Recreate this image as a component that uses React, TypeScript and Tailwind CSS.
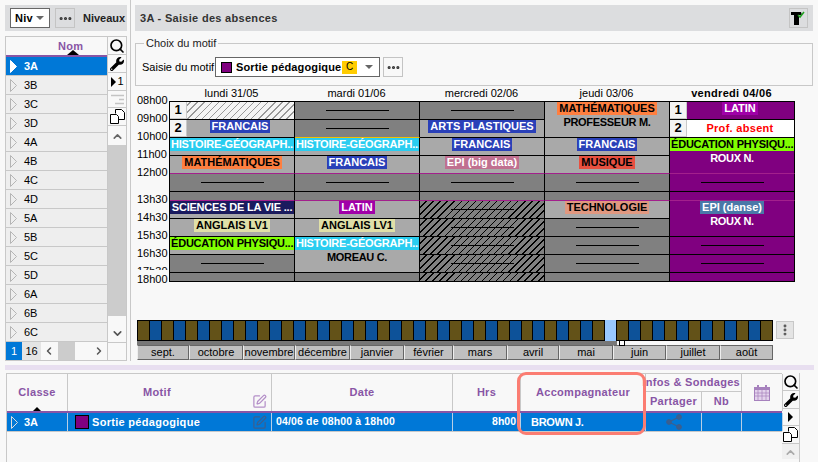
import { Search, Ellipsis, EllipsisVertical, ChevronUp, ChevronDown, ChevronLeft, ChevronRight, SquarePen } from 'lucide-react';
import { FaWrench } from 'react-icons/fa';

const classes = ['3A', '3B', '3C', '3D', '4A', '4B', '4C', '4D', '5A', '5B', '5C', '5D', '6A', '6B', '6C'];
const months = [
    ['sept.', 'w-[52px]'], ['octobre', 'w-[54px]'], ['novembre', 'w-[52px]'], ['décembre', 'w-[55px]'],
    ['janvier', 'w-[54px]'], ['février', 'w-[49px]'], ['mars', 'w-[54px]'], ['avril', 'w-[52px]'],
    ['mai', 'w-[54px]'], ['juin', 'w-[53px]'], ['juillet', 'w-[54px]'], ['août', 'w-[53px]'],
];

const HATCH_LIGHT = 'bg-[repeating-linear-gradient(135deg,#f4f4f4_0_4px,#999_4px_5px)]';
const HATCH_DARK = 'bg-[repeating-linear-gradient(135deg,#808080_0_4px,#000_4px_5px)]';
const DARK = 'bg-[#808080]';
const GRAY = 'bg-[#a9a9a9]';
const PURPLE = 'bg-[#800080]';
const LINE = 'border-t-black';
const PINK = 'border-t-[#a3208c]';

type Slot = {
    bg?: string;
    span?: string;
    top?: string;
    dash?: boolean;
    band?: string;
    chip?: string;
    sub?: string;
    text?: string;
    num?: string;
    subColor?: string;
};

const cyan = 'bg-[#29cdf0] text-white';
const green = 'bg-[#80ff00] text-black';
const blue = 'bg-[#2a40b8] text-white';
const orange = 'bg-[#ff7f40] text-black';
const pale = 'bg-[#e0e0a8] text-black';
const latin = 'bg-[#a000a8] text-white';

const days: { label: string; bold?: boolean; slots: Slot[] }[] = [
    {
        label: 'lundi 31/05',
        slots: [
            { bg: HATCH_LIGHT, num: '1' },
            { bg: GRAY, chip: blue, text: 'FRANCAIS', num: '2' },
            { bg: GRAY, band: cyan, text: 'HISTOIRE-GÉOGRAPH...' },
            { bg: GRAY, chip: orange, text: 'MATHÉMATIQUES' },
            { bg: DARK, dash: true, top: PINK },
            { bg: DARK },
            { bg: GRAY, band: 'bg-[#1a1a5e] text-white', text: 'SCIENCES DE LA VIE ...', top: PINK },
            { bg: GRAY, chip: pale, text: 'ANGLAIS LV1' },
            { bg: GRAY, band: green, text: 'ÉDUCATION PHYSIQU...' },
            { bg: DARK, dash: true },
            { bg: DARK },
        ],
    },
    {
        label: 'mardi 01/06',
        slots: [
            { bg: DARK, dash: true },
            { bg: DARK, dash: true },
            { bg: GRAY, band: cyan, text: 'HISTOIRE-GÉOGRAPH...', top: 'border-t-[#f0c000]' },
            { bg: GRAY, chip: blue, text: 'FRANCAIS' },
            { bg: DARK, dash: true, top: PINK },
            { bg: DARK },
            { bg: GRAY, chip: latin, text: 'LATIN', top: PINK },
            { bg: GRAY, chip: pale, text: 'ANGLAIS LV1' },
            { bg: GRAY, span: 'row-span-2', band: cyan, text: 'HISTOIRE-GÉOGRAPH...', sub: 'MOREAU C.' },
            { bg: DARK },
        ],
    },
    {
        label: 'mercredi 02/06',
        slots: [
            { bg: DARK, dash: true },
            { bg: GRAY, chip: blue, text: 'ARTS PLASTIQUES' },
            { bg: GRAY, chip: blue, text: 'FRANCAIS' },
            { bg: GRAY, chip: 'bg-[#c07090] text-white', text: 'EPI (big data)' },
            { bg: DARK, dash: true, top: PINK },
            { bg: DARK },
            { bg: HATCH_DARK, dash: true, top: PINK },
            { bg: HATCH_DARK, dash: true },
            { bg: HATCH_DARK, dash: true },
            { bg: HATCH_DARK, dash: true },
            { bg: HATCH_DARK },
        ],
    },
    {
        label: 'jeudi 03/06',
        slots: [
            { bg: GRAY, span: 'row-span-2', chip: orange, text: 'MATHÉMATIQUES', sub: 'PROFESSEUR M.' },
            { bg: GRAY, chip: blue, text: 'FRANCAIS' },
            { bg: GRAY, chip: 'bg-[#e85040] text-black', text: 'MUSIQUE' },
            { bg: DARK, dash: true, top: PINK },
            { bg: DARK },
            { bg: GRAY, chip: 'bg-[#e09880] text-black', text: 'TECHNOLOGIE', top: PINK },
            { bg: DARK, dash: true },
            { bg: DARK, dash: true },
            { bg: DARK, dash: true },
            { bg: DARK },
        ],
    },
    {
        label: 'vendredi 04/06',
        bold: true,
        slots: [
            { bg: PURPLE, chip: latin, text: 'LATIN', num: '1' },
            { bg: 'bg-white', text: 'Prof. absent', num: '2', subColor: 'text-[#ff0000]' },
            { bg: PURPLE, span: 'row-span-2', band: green, text: 'ÉDUCATION PHYSIQU...', sub: 'ROUX N.', subColor: 'text-white' },
            { bg: PURPLE, dash: true, top: PINK },
            { bg: PURPLE },
            { bg: PURPLE, span: 'row-span-2', chip: 'bg-[#4a78a8] text-white', text: 'EPI (danse)', sub: 'ROUX N.', subColor: 'text-white', top: PINK },
            { bg: PURPLE, dash: true },
            { bg: PURPLE, dash: true },
            { bg: PURPLE },
        ],
    },
];

function Arrow({ fill = 'none', stroke = '#b5b5b5' }: { fill?: string; stroke?: string }) {
    return (
        <svg width="7" height="13" viewBox="0 0 7 13" className="shrink-0">
            <polygon points="0.5,0.5 6.5,6.5 0.5,12.5" fill={fill} stroke={stroke} />
        </svg>
    );
}

function CopyIcon() {
    return (
        <svg width="15" height="15" viewBox="0 0 15 15">
            <path d="M5.5 4.5v-4h6l3 3v7h-6" fill="#fff" stroke="#000" />
            <path d="M0.5 5.5h6l2 2v7h-8z" fill="#fff" stroke="#000" />
        </svg>
    );
}

function ToolButton({ children, className = '' }: { children: React.ReactNode; className?: string }) {
    return <div className={`flex items-center justify-center border-b border-[#c8c8c8] ${className}`}>{children}</div>;
}

function Cell({ slot }: { slot: Slot }) {
    return (
        <div className={`relative flex flex-col items-center overflow-hidden border-t border-r border-r-black ${slot.top ?? LINE} ${slot.bg} ${slot.span ?? ''} ${slot.num ? 'pl-[16px]' : ''}`}>
            {slot.num && (
                <div className="absolute left-0 top-0 z-10 flex h-[17px] w-[17px] items-center justify-center border-r border-b border-[#c8c8c8] bg-[#f4f4f4] text-[13px] font-bold text-black">
                    {slot.num}
                </div>
            )}
            {slot.dash && <div className="mt-[8px] h-px w-[63px] bg-black" />}
            {slot.band && (
                <div className={`h-[13px] w-full whitespace-nowrap px-px text-center text-[11px] font-bold leading-[13px] tracking-[-0.2px] ${slot.band}`}>
                    {slot.text}
                </div>
            )}
            {slot.chip && (
                <div className={`h-[13px] whitespace-nowrap px-[2px] text-[11px] font-bold leading-[13px] ${slot.chip}`}>
                    {slot.text}
                </div>
            )}
            {!slot.band && !slot.chip && slot.text && (
                <div className={`h-[13px] whitespace-nowrap text-[11px] font-bold leading-[17px] tracking-[0.3px] ${slot.subColor}`}>{slot.text}</div>
            )}
            {slot.sub && (
                <div className={`h-[13px] whitespace-nowrap text-[11px] font-bold leading-[14px] tracking-[-0.3px] ${slot.subColor ?? 'text-black'}`}>{slot.sub}</div>
            )}
        </div>
    );
}

function LeftPanel() {
    return (
        <div className="flex h-[361px] w-[131px] shrink-0 flex-col border-r border-[#c8c8c8] pl-[5px] pr-[3px] pt-[5px]">
            <div className="flex h-[26px] items-center bg-[#dcdddf] pl-[5px]">
                <div className="flex h-[20px] w-[40px] items-center justify-between border border-[#666] bg-white pl-[4px] pr-[5px] text-[11px] font-bold tracking-[0.3px] text-black">
                    Niv
                    <span className="h-0 w-0 border-x-[4px] border-t-[4px] border-x-transparent border-t-[#666]" />
                </div>
                <div className="ml-[5px] flex h-[20px] w-[20px] items-center justify-center border border-[#c4c4c4]">
                    <Ellipsis size={15} strokeWidth={3} className="text-[#333]" />
                </div>
                <span className="ml-[8px] text-[11px] font-bold text-[#222]">Niveaux</span>
            </div>
            <div className="mt-[5px] flex h-[325px] border border-[#c8c8c8]">
                <div className="flex w-[103px] flex-col border-r border-[#c8c8c8]">
                    <div className="relative flex h-[20px] shrink-0 items-center justify-center border-b-2 border-[#8855a5] pl-[28px] text-[11px] font-bold tracking-[0.3px] text-[#8855a5]">
                        Nom
                        <span className="absolute bottom-0 left-[61px] h-0 w-0 border-x-[6px] border-b-[5px] border-x-transparent border-b-black" />
                    </div>
                    {classes.map((c, i) => (
                        <div
                            key={c}
                            className={`flex h-[19px] shrink-0 items-center gap-[7px] border-b border-[#c8c8c8] pl-[4px] text-[11px] ${i === 0 ? 'bg-[#0078d7] font-bold text-white' : 'bg-[#eeeeee] text-black'}`}
                        >
                            <Arrow fill={i === 0 ? '#fff' : 'none'} stroke={i === 0 ? '#fff' : '#b5b5b5'} />
                            {c}
                        </div>
                    ))}
                    <div className="flex h-[18px] items-center text-[11px]">
                        <div className="flex h-full w-[16px] items-center justify-center bg-[#0078d7] text-white">1</div>
                        <div className="flex h-full w-[19px] items-center justify-center bg-[#e4e4e4] text-black">16</div>
                        <ChevronLeft size={12} strokeWidth={3} className="ml-[2px] text-[#555]" />
                        <div className="ml-[3px] h-full w-[17px] bg-[#cccccc]" />
                        <ChevronRight size={12} strokeWidth={3} className="ml-[18px] text-[#555]" />
                    </div>
                </div>
                <div className="flex w-[18px] flex-col">
                    <ToolButton className="h-[18px] shrink-0"><Search size={16} strokeWidth={2.5} className="text-black" /></ToolButton>
                    <ToolButton className="h-[18px] shrink-0"><FaWrench size={14} className="text-black" /></ToolButton>
                    <ToolButton className="h-[18px] shrink-0 text-[11px] text-black">
                        <span className="mr-[2px] h-0 w-0 border-y-[5px] border-l-[5px] border-y-transparent border-l-black" />1
                    </ToolButton>
                    <ToolButton className="h-[17px] shrink-0">
                        <svg width="15" height="11" viewBox="0 0 15 11"><path d="M1 1.5h13M9 5.5h5M5 9.5h9" stroke="#c4c4c4" strokeWidth="1.4" /></svg>
                    </ToolButton>
                    <ToolButton className="h-[18px] shrink-0"><CopyIcon /></ToolButton>
                    <div className="flex flex-1 flex-col items-center">
                        <ChevronUp size={13} strokeWidth={3} className="mt-[4px] text-[#666]" />
                        <div className="mt-[2px] h-[171px] w-full bg-[#cccccc]" />
                        <ChevronDown size={13} strokeWidth={3} className="mt-[11px] text-[#555]" />
                    </div>
                    <div className="h-[18px] shrink-0 border-t border-[#c8c8c8]" />
                </div>
            </div>
        </div>
    );
}

function Timetable() {
    return (
        <div className="ml-[2px] flex">
            <div className="flex w-[32px] flex-col pt-[5px] text-right text-[11px] leading-[18px] text-black">
                {['08h00', '09h00', '10h00', '11h00', '12h00'].map((t) => (
                    <div key={t} className="h-[18px] pr-[3px]">{t}</div>
                ))}
                <div className="mt-[9px] h-[18px] pr-[3px]">13h30</div>
                {['14h30', '15h30', '16h30', '17h30'].map((t) => (
                    <div key={t} className="h-[18px] pr-[3px]">{t}</div>
                ))}
                <div className="relative -mt-[10px] h-[18px] bg-[#f8f8f8] pr-[3px]">18h00</div>
            </div>
            <div>
                <div className="grid w-[627px] grid-cols-[repeat(5,125px)]">
                    {days.map((d) => (
                        <div key={d.label} className={`h-[15px] text-center text-[11px] leading-[15px] text-black ${d.bold ? 'font-bold tracking-[0.3px]' : ''}`}>
                            {d.label}
                        </div>
                    ))}
                </div>
                <div className="grid w-[626px] grid-flow-col grid-cols-[repeat(5,125px)] grid-rows-[18px_18px_18px_18px_18px_9px_18px_18px_18px_18px_9px] border-b border-l border-black">
                    {days.flatMap((d) => d.slots.map((s, i) => <Cell key={d.label + i} slot={s} />))}
                </div>
            </div>
        </div>
    );
}

function YearBar() {
    const weeks = Array.from({ length: 52 }, (_, i) => i);
    return (
        <div className="ml-[2px] mt-[32px] flex">
            <div className="w-[636px]">
                <div className="flex h-[21px] items-stretch border-y border-black bg-black pl-px">
                    {weeks.slice(0, 39).map((w) => (
                        <div key={w} className={`mr-px w-[11px] ${w % 2 === 0 ? 'bg-[#635218]' : 'bg-[#0d5299]'}`} />
                    ))}
                    <div className="-my-px mr-px w-[11px] bg-[#99c9ff]" />
                    {weeks.slice(39).map((w) => (
                        <div key={w} className={`mr-px w-[11px] ${w % 2 === 0 ? 'bg-[#0d5299]' : 'bg-[#635218]'}`} />
                    ))}
                </div>
                <div className="relative h-[4px] w-[480px] bg-[#777]">
                    <span className="absolute -top-px left-[482px] h-[6px] w-[6px] border border-black bg-white" />
                </div>
                <div className="flex">
                    {months.map(([m, w]) => (
                        <div key={m} className={`flex h-[15px] items-center justify-center border border-[#666] border-l-[#eee] bg-[#c0c0c0] text-[11px] text-black ${w}`}>
                            {m}
                        </div>
                    ))}
                </div>
            </div>
            <div className="ml-[3px] mt-px flex h-[18px] w-[18px] items-center justify-center border border-[#c8c8c8] bg-[#e4e4e4]">
                <EllipsisVertical size={14} strokeWidth={3} className="text-[#555]" />
            </div>
        </div>
    );
}

function RightPanel() {
    return (
        <div className="flex min-w-0 flex-1 flex-col pl-[4px] pr-[5px] pt-[5px]">
            <div className="flex h-[26px] shrink-0 items-center justify-between bg-[#dcdddf] pl-[5px] pr-[5px]">
                <span className="text-[11px] font-bold tracking-[0.3px] text-[#333]">3A - Saisie des absences</span>
                <div className="flex h-[20px] w-[19px] items-center justify-center border border-[#c4c4c4]">
                    <svg width="15" height="15" viewBox="0 0 15 15">
                        <path d="M0 1h10l1 3H8v10H3V4H0z" fill="#000" />
                        <path d="M7 4l2 2 4-5" fill="none" stroke="#22a022" strokeWidth="1.6" />
                    </svg>
                </div>
            </div>
            <fieldset className="mt-[5px] h-[50px] shrink-0 border border-[#c8c8c8] pl-[6px]">
                <legend className="ml-[2px] px-[2px] text-[11px] leading-[14px] text-[#222]">Choix du motif</legend>
                <div className="mt-[7px] flex items-center text-[11px] text-black">
                    <span className="w-[73px] whitespace-nowrap">Saisie du motif</span>
                    <div className="flex h-[20px] w-[165px] items-center border border-[#666] bg-white pl-[5px]">
                        <span className="h-[11px] w-[11px] border border-black bg-[#800080]" />
                        <span className="ml-[4px] w-[106px] shrink-0 overflow-hidden whitespace-nowrap font-bold tracking-[0.15px]">Sortie pédagogique</span>
                        <span className="flex h-[13px] w-[15px] shrink-0 items-start justify-center bg-[#ffcc00] text-[10px] leading-[11px]">C</span>
                        <span className="ml-[8px] h-0 w-0 border-x-[4px] border-t-[4px] border-x-transparent border-t-[#666]" />
                    </div>
                    <div className="ml-[3px] flex h-[20px] w-[20px] items-center justify-center border border-[#c4c4c4]">
                        <Ellipsis size={15} strokeWidth={3} className="text-[#333]" />
                    </div>
                </div>
            </fieldset>
            <Timetable />
            <YearBar />
        </div>
    );
}

function HeaderCell({ children, className = '' }: { children?: React.ReactNode; className?: string }) {
    return (
        <div className={`flex items-center justify-center border-r border-[#c8c8c8] text-[11px] font-bold tracking-[0.3px] text-[#8855a5] ${className}`}>
            {children}
        </div>
    );
}

function BottomTable() {
    const cols = 'grid-cols-[61px_204px_181px_68px_125px_56px_40px_41px]';
    return (
        <div className="relative flex flex-1 pl-[6px] pt-[3px]">
            <div className="h-[90px] w-[776px] border-l border-t border-[#c8c8c8]">
                <div className={`grid h-[37px] grid-rows-[18px_19px] ${cols}`}>
                    <HeaderCell className="relative row-span-2">
                        Classe
                        <span className="absolute bottom-0 left-[26px] h-0 w-0 border-x-[4px] border-b-[4px] border-x-transparent border-b-black" />
                    </HeaderCell>
                    <HeaderCell className="relative row-span-2 pr-[25px]">
                        Motif
                        <SquarePen size={15} className="absolute bottom-[2px] right-[4px] text-[#b48fc8]" />
                    </HeaderCell>
                    <HeaderCell className="row-span-2">Date</HeaderCell>
                    <HeaderCell className="row-span-2">Hrs</HeaderCell>
                    <HeaderCell className="row-span-2">Accompagnateur</HeaderCell>
                    <HeaderCell className="col-span-2 justify-end whitespace-nowrap border-b pr-px">Infos &amp; Sondages</HeaderCell>
                    <HeaderCell className="row-span-2">
                        <svg width="16" height="16" viewBox="0 0 16 16">
                            <rect x="0.5" y="2.5" width="15" height="13" fill="#e3d3ec" stroke="#a681bd" />
                            <rect x="0" y="2" width="16" height="3" fill="#a681bd" />
                            <rect x="3" y="0" width="2" height="4" fill="#a681bd" />
                            <rect x="11" y="0" width="2" height="4" fill="#a681bd" />
                            <path d="M0 8h16M0 11h16M4 5v10M8 5v10M12 5v10" stroke="#a681bd" strokeWidth="0.7" />
                        </svg>
                    </HeaderCell>
                    <HeaderCell>Partager</HeaderCell>
                    <HeaderCell>Nb</HeaderCell>
                </div>
                <div className={`grid h-[21px] border-b border-t-2 border-b-[#c8c8c8] border-t-[#8855a5] bg-[#0078d7] text-[11px] font-bold text-white ${cols}`}>
                    <div className="flex items-center gap-[6px] border-r border-[#b8cfe6] pl-[4px]">
                        <Arrow fill="#0078d7" stroke="#ddd" />
                        3A
                    </div>
                    <div className="flex items-center border-r border-[#b8cfe6] pl-[7px]">
                        <span className="h-[14px] w-[14px] border border-black bg-[#800080]" />
                        <span className="ml-[3px] tracking-[0.3px]">Sortie pédagogique</span>
                        <SquarePen size={15} className="ml-auto mr-[4px] text-[#3b5f8f]" />
                    </div>
                    <div className="flex items-center border-r border-[#b8cfe6] pl-[4px] text-[10.5px] tracking-[0.15px]">04/06 de 08h00 à 18h00</div>
                    <div className="flex items-center justify-end border-r border-[#b8cfe6] pr-[4px] text-[10.5px]">8h00</div>
                    <div className="flex items-center border-r border-[#b8cfe6] pl-[10px] tracking-[-0.3px]">BROWN J.</div>
                    <div className="flex items-center justify-center border-r border-[#b8cfe6]">
                        <svg width="16" height="16" viewBox="0 0 16 16" fill="#3b5f8f" stroke="#3b5f8f">
                            <path d="M3 8l10-5M3 8l10 5" fill="none" strokeWidth="1.2" />
                            <circle cx="3" cy="8" r="2.4" />
                            <circle cx="13" cy="3" r="2.4" />
                            <circle cx="13" cy="13" r="2.4" />
                        </svg>
                    </div>
                    <div className="border-r border-[#b8cfe6]" />
                    <div className="border-r border-[#b8cfe6]" />
                </div>
            </div>
            <div className="flex h-[90px] w-[18px] flex-col border-r border-[#c8c8c8]">
                <ToolButton className="h-[18px] shrink-0"><Search size={16} strokeWidth={2.5} className="text-black" /></ToolButton>
                <ToolButton className="h-[18px] shrink-0"><FaWrench size={14} className="text-black" /></ToolButton>
                <ToolButton className="h-[17px] shrink-0">
                    <span className="h-0 w-0 border-y-[5px] border-l-[5px] border-y-transparent border-l-black" />
                </ToolButton>
                <ToolButton className="h-[18px] shrink-0"><CopyIcon /></ToolButton>
                <div className="flex justify-center bg-[#f0f0f0] pt-[2px]">
                    <ChevronUp size={13} strokeWidth={3} className="text-[#aaa]" />
                </div>
            </div>
            <div className="absolute left-[517px] top-[2px] h-[63px] w-[129px] rounded-[9px] border-[3px] border-[#fb7d72]" />
        </div>
    );
}

export default function App() {
    return (
        <div className="flex h-[462px] w-[818px] flex-col overflow-hidden bg-[#f8f8f8] [font-family:'Liberation_Sans',Arial,sans-serif]">
            <div className="flex h-[361px] shrink-0">
                <LeftPanel />
                <RightPanel />
            </div>
            <div className="ml-[5px] mr-[4px] mt-[4px] h-[5px] shrink-0 bg-[#e8dff0]" />
            <BottomTable />
        </div>
    );
}
